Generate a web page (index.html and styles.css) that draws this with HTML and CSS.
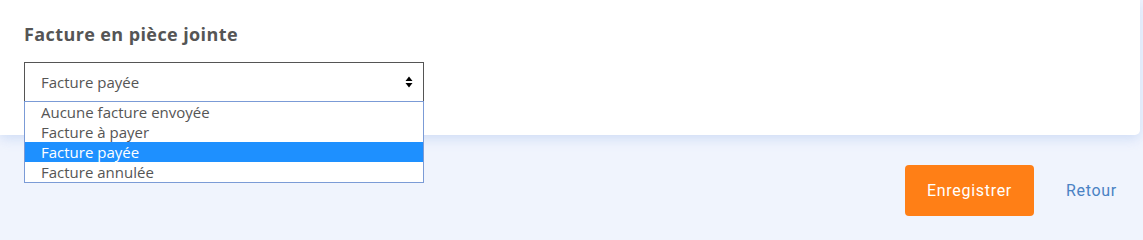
FILE: index.html
```html
<!DOCTYPE html>
<html lang="fr">
<head>
<meta charset="utf-8">
<link rel="stylesheet" href="styles.css">
</head>
<body>
<div class="page">
  <section class="card">
    <h2 class="title">Facture en pièce jointe</h2>
    <div class="select-wrap">
      <div class="select">
        <span class="select-value">Facture payée</span>
        <svg class="select-arrows" width="8" height="12" viewBox="0 0 8 12"><path d="M4 0.5L7.5 5H0.5Z M4 11.5L7.5 7H0.5Z" fill="#000"/></svg>
      </div>
      <ul class="options">
        <li class="option">Aucune facture envoyée</li>
        <li class="option">Facture à payer</li>
        <li class="option selected">Facture payée</li>
        <li class="option">Facture annulée</li>
      </ul>
    </div>
  </section>
  <div class="actions">
    <button class="btn-save">Enregistrer</button>
    <a class="link-back">Retour</a>
  </div>
</div>
</body>
</html>
```
FILE: styles.css
```css
html, body {
  margin: 0;
  padding: 0;
}
body {
  background: #f0f4fd;
  font-family: "Open Sans", "Noto Sans", sans-serif;
  width: 1143px;
  height: 232px;
  overflow: hidden;
}
.page {
  display: flex;
  flex-direction: column;
}
.card {
  width: 1140px;
  height: 135px;
  box-sizing: border-box;
  background: #fff;
  border-bottom-right-radius: 5px;
  box-shadow: 0 4px 12px rgba(170, 195, 240, 0.45);
  padding: 22px 24px 0 24px;
  position: relative;
  z-index: 1;
}
.title {
  margin: 0;
  font-size: 18px;
  font-weight: 700;
  color: #555;
  line-height: 24px;
  letter-spacing: 0.4px;
}
.select-wrap {
  margin-top: 16px;
  width: 400px;
  position: relative;
}
.select {
  height: 40px;
  box-sizing: border-box;
  border: 1px solid #555;
  display: flex;
  align-items: center;
  justify-content: space-between;
  padding: 0 10px 0 16px;
  background: #fff;
}
.select-value {
  font-size: 15px;
  color: #555;
}
.options {
  position: absolute;
  top: 39px;
  left: 0;
  width: 400px;
  box-sizing: border-box;
  margin: 0;
  padding: 0;
  list-style: none;
  border: 1px solid #7b9bd6;
  background: #fff;
}
.option {
  height: 20px;
  line-height: 20px;
  padding-left: 16px;
  font-size: 15px;
  color: #555;
}
.option.selected {
  background: #1e90ff;
  color: #fff;
}
.actions {
  display: flex;
  justify-content: flex-end;
  align-items: center;
  margin-top: 30px;
  padding-right: 26px;
}
.btn-save {
  width: 129px;
  height: 51px;
  border: none;
  border-radius: 4px;
  background: #ff7f16;
  color: #fff;
  font-family: "Roboto", sans-serif;
  font-size: 16px;
  letter-spacing: 0.7px;
}
.link-back {
  margin-left: 32px;
  font-family: "Roboto", sans-serif;
  font-size: 16px;
  letter-spacing: 0.7px;
  color: #4a82c4;
}
```
